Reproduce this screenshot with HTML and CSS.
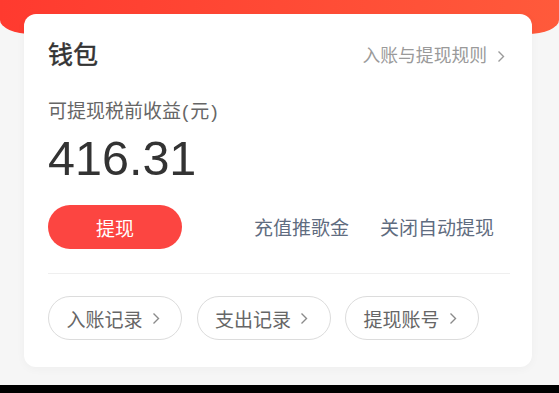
FILE: index.html
```html
<!DOCTYPE html>
<html lang="zh-CN">
<head>
<meta charset="utf-8">
<title>钱包</title>
<link rel="stylesheet" href="styles.css">
</head>
<body>
<div class="page">
  <div class="hero"></div>
  <section class="card">
    <div class="head">
      <h1 class="title">钱包</h1>
      <a class="rules">入账与提现规则<svg class="chev" width="8" height="13" viewBox="0 0 8 13"><polyline points="1.5,1.5 6.5,6.5 1.5,11.5" fill="none" stroke="#9a9a9a" stroke-width="1.4"/></svg></a>
    </div>
    <div class="label">可提现税前收益<span class="unit">(元)</span></div>
    <div class="amount">416.31</div>
    <div class="actions">
      <button class="withdraw">提现</button>
      <div class="links">
        <a class="link">充值推歌金</a>
        <a class="link">关闭自动提现</a>
      </div>
    </div>
    <div class="divider"></div>
    <div class="pills">
      <a class="pill">入账记录<svg class="chev" width="8" height="13" viewBox="0 0 8 13"><polyline points="1.5,1.5 6.5,6.5 1.5,11.5" fill="none" stroke="#8a8a8a" stroke-width="1.4"/></svg></a>
      <a class="pill">支出记录<svg class="chev" width="8" height="13" viewBox="0 0 8 13"><polyline points="1.5,1.5 6.5,6.5 1.5,11.5" fill="none" stroke="#8a8a8a" stroke-width="1.4"/></svg></a>
      <a class="pill">提现账号<svg class="chev" width="8" height="13" viewBox="0 0 8 13"><polyline points="1.5,1.5 6.5,6.5 1.5,11.5" fill="none" stroke="#8a8a8a" stroke-width="1.4"/></svg></a>
    </div>
  </section>
</div>
<div class="bottom-bar"></div>
</body>
</html>
```

FILE: styles.css
```css
* { box-sizing: border-box; }
html, body { margin: 0; padding: 0; }
body {
  background: #000;
  font-family: "Liberation Sans", "Noto Sans CJK SC", sans-serif;
  width: 559px;
  height: 393px;
  overflow: hidden;
}
.page {
  height: 385px;
  background: #f6f6f6;
  overflow: hidden;
}
.hero {
  height: 34px;
  background: linear-gradient(90deg, #ff3a2f 0%, #ff4a35 50%, #ff5a3b 100%);
  border-radius: 0 0 32px 32px / 0 0 14px 14px;
}
.card {
  margin: -20px 0 0 24px;
  width: 508px;
  height: 353px;
  background: #fff;
  border-radius: 12px;
  box-shadow: 0 2px 10px rgba(0,0,0,0.035);
  padding: 24px 22px 0 24px;
}
.head {
  display: flex;
  justify-content: space-between;
  align-items: center;
  height: 34px;
}
.title {
  margin: 0;
  font-size: 25px;
  font-weight: 400;
  -webkit-text-stroke: 0.5px #333;
  line-height: 34px;
  color: #333;
}
.rules {
  display: flex;
  align-items: center;
  gap: 10px;
  font-size: 17.8px;
  color: #9a9a9a;
  line-height: 24px;
  margin-right: 5px;
  margin-top: 2px;
}
.label {
  margin-top: 27px;
  font-size: 19px;
  line-height: 26px;
  color: #666;
}
.unit {
  letter-spacing: 2px;
  margin-left: 1px;
}
.amount {
  margin-top: 9px;
  font-size: 48.5px;
  line-height: 48px;
  color: #333;
}
.actions {
  margin-top: 23px;
  display: flex;
  align-items: center;
  justify-content: space-between;
  height: 44px;
}
.withdraw {
  width: 134px;
  height: 44px;
  border: 0;
  border-radius: 22px;
  background: #fc4541;
  color: #fff;
  font-family: inherit;
  font-size: 19px;
  padding: 0;
}
.links {
  display: flex;
  gap: 31px;
  margin-right: 16px;
}
.link {
  font-size: 19px;
  color: #5f6c80;
  line-height: 26px;
  margin-top: 3px;
}
.divider {
  margin-top: 24px;
  height: 1px;
  background: #efefef;
}
.pills {
  margin-top: 22px;
  display: flex;
  gap: 14.5px;
}
.pill {
  width: 134px;
  height: 44px;
  border: 1px solid #dcdcdc;
  border-radius: 22px;
  display: flex;
  align-items: center;
  justify-content: center;
  gap: 9px;
  font-size: 19px;
  color: #666;
  padding-right: 4px;
}
.chev { display: block; }
.bottom-bar {
  height: 8px;
  background: #000;
}
```
